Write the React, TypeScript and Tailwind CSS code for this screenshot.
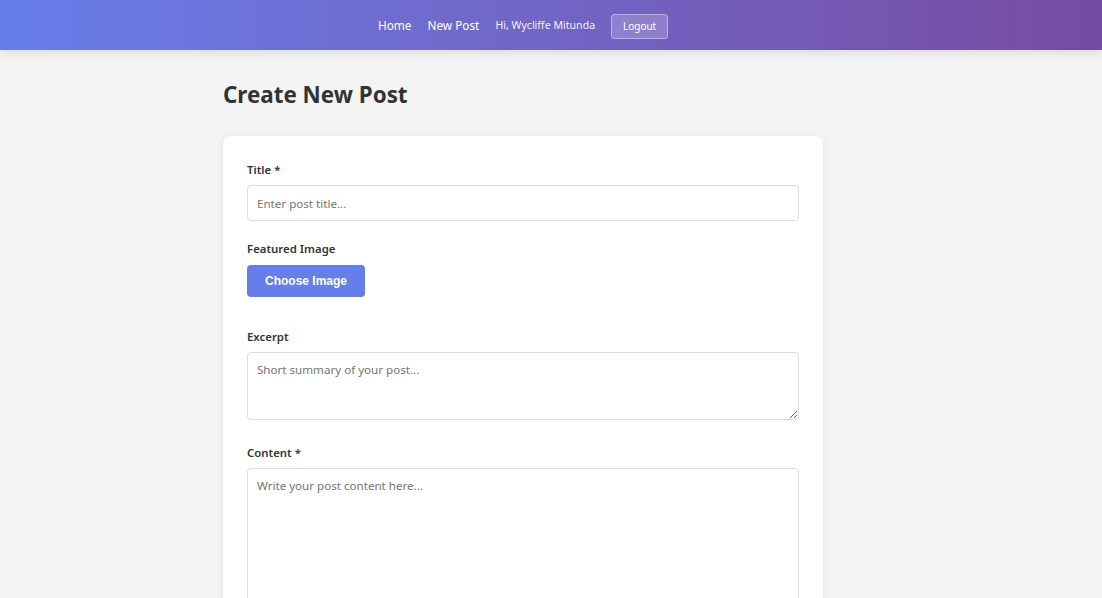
import React from "react";

export default function App() {
  const font = { fontFamily: '"Noto Sans", "Open Sans", sans-serif' };
  return (
    <div className="min-h-[598px] bg-[#f4f4f4] text-[#333]" style={font}>
      <header className="h-[50px] bg-gradient-to-r from-[#667eea] to-[#764ba2] shadow-[0_2px_10px_rgba(0,0,0,0.12)]">
        <div className="flex h-full items-center justify-center pr-[56px] pt-[2px]">
          <nav className="flex items-center">
            <a className="text-[11.8px] text-white">Home</a>
            <a className="ml-[16px] text-[11.8px] text-white">New Post</a>
            <span className="ml-[16px] text-[10.6px] text-white/95">Hi, Wycliffe Mitunda</span>
            <button className="ml-[16px] h-[25px] w-[57px] rounded-[4px] border border-white/40 bg-white/20 text-[10px] text-white">
              Logout
            </button>
          </nav>
        </div>
      </header>
      <main className="flex justify-center pr-[56px]">
        <div className="w-[600px]">
          <h1 className="mt-[30px] text-[22.4px] font-bold leading-[30px] text-[#333]">Create New Post</h1>
          <div className="mt-[26px] rounded-[8px] bg-white px-[24px] pt-[24px] pb-[40px] shadow-[0_2px_10px_rgba(0,0,0,0.08)]">
            <label className="block text-[11.4px] font-semibold leading-[20px] text-[#333]">Title *</label>
            <input
              className="mt-[5px] block h-[36px] w-full rounded-[4px] border border-[#ddd] px-[9px] text-[11.6px] outline-none placeholder:text-[#757575]"
              placeholder="Enter post title..."
            />
            <label className="mt-[18px] block text-[11.4px] font-semibold leading-[20px] text-[#333]">Featured Image</label>
            <button
              className="mt-[6px] block h-[32px] w-[118px] rounded-[4px] bg-[#667eea] text-[12px] font-bold text-white"
              style={{ fontFamily: '"Liberation Sans", Arial, sans-serif' }}
            >
              Choose Image
            </button>
            <label className="mt-[30px] block text-[11.4px] font-semibold leading-[20px] text-[#333]">Excerpt</label>
            <textarea
              className="mt-[5px] block h-[68px] w-full resize-y rounded-[4px] border border-[#ddd] px-[9px] py-[8px] text-[11.6px] outline-none placeholder:text-[#757575]"
              placeholder="Short summary of your post..."
            />
            <label className="mt-[23px] block text-[11.4px] font-semibold leading-[20px] text-[#333]">Content *</label>
            <textarea
              className="mt-[5px] block h-[260px] w-full resize-y rounded-[4px] border border-[#ddd] px-[9px] py-[8px] text-[11.6px] outline-none placeholder:text-[#757575]"
              placeholder="Write your post content here..."
            />
          </div>
        </div>
      </main>
    </div>
  );
}
